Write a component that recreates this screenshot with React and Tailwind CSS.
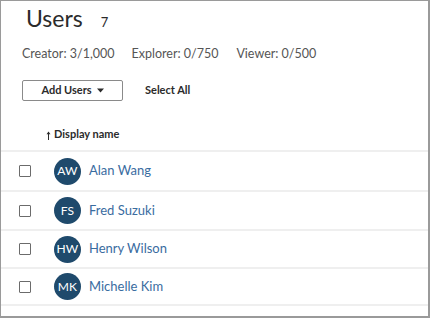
import React from "react";

const users = [
  { initials: "AW", name: "Alan Wang", h: "h-[40px]" },
  { initials: "FS", name: "Fred Suzuki", h: "h-[39px]" },
  { initials: "HW", name: "Henry Wilson", h: "h-[38px]" },
  { initials: "MK", name: "Michelle Kim", h: "h-[37px]" },
];

export default function App() {
  return (
    <div className="w-[430px] h-[318px] bg-white border-t border-l border-r-2 border-b-2 border-[#9a9a9a] font-['Lato','Liberation_Sans',sans-serif] overflow-hidden flex flex-col">
      <div className="flex items-baseline pl-[25px] pt-[3px] h-[36px]">
        <span className="text-[23px] leading-[28px] text-[#2b2b2b]">Users</span>
        <span className="ml-[18px] text-[13px] text-[#2b2b2b]">7</span>
      </div>
      <div className="flex pl-[21px] pt-[8px] text-[12.5px] leading-[18px] text-[#555]">
        <span>Creator: 3/1,000</span>
        <span className="ml-[17px]">Explorer: 0/750</span>
        <span className="ml-[18px]">Viewer: 0/500</span>
      </div>
      <div className="flex items-center pl-[21px] mt-[17px]">
        <button className="w-[101px] h-[21px] border border-[#8a8a8a] rounded-[2px] flex items-center justify-center text-[11px] font-bold text-[#2b2b2b]">
          Add Users
          <svg width="7" height="5" viewBox="0 0 7 5" className="ml-[5px]">
            <path d="M0 0.5 L7 0.5 L3.5 4.5 Z" fill="#2b2b2b" />
          </svg>
        </button>
        <span className="ml-[22px] text-[11px] font-bold text-[#2b2b2b]">Select All</span>
      </div>
      <div className="flex items-center h-[33px] mt-[18px] pl-[45px] text-[11px] font-bold text-[#2b2b2b] border-b-2 border-[#efefef]">
        <svg width="5" height="9" viewBox="0 0 5 9" className="mr-[3px] mt-[1px]">
          <path d="M2.5 1 V9" stroke="#2b2b2b" strokeWidth="1" />
          <path d="M0.5 3.2 L2.5 0.5 L4.5 3.2 Z" fill="#2b2b2b" />
        </svg>
        Display name
      </div>
      {users.map((u) => (
        <div key={u.initials} className={`flex items-center ${u.h} border-b-2 border-[#efefef]`}>
          <div className="ml-[18px] w-[12px] h-[12px] border-[1.5px] border-[#6b6b6b] rounded-[1px]" />
          <div className="ml-[23px] w-[27px] h-[27px] rounded-full bg-[#1f4a6c] flex items-center justify-center text-white text-[12px] tracking-[0.2px]">
            {u.initials}
          </div>
          <span className="ml-[8px] text-[13px] text-[#3a6c9f]">{u.name}</span>
        </div>
      ))}
    </div>
  );
}
